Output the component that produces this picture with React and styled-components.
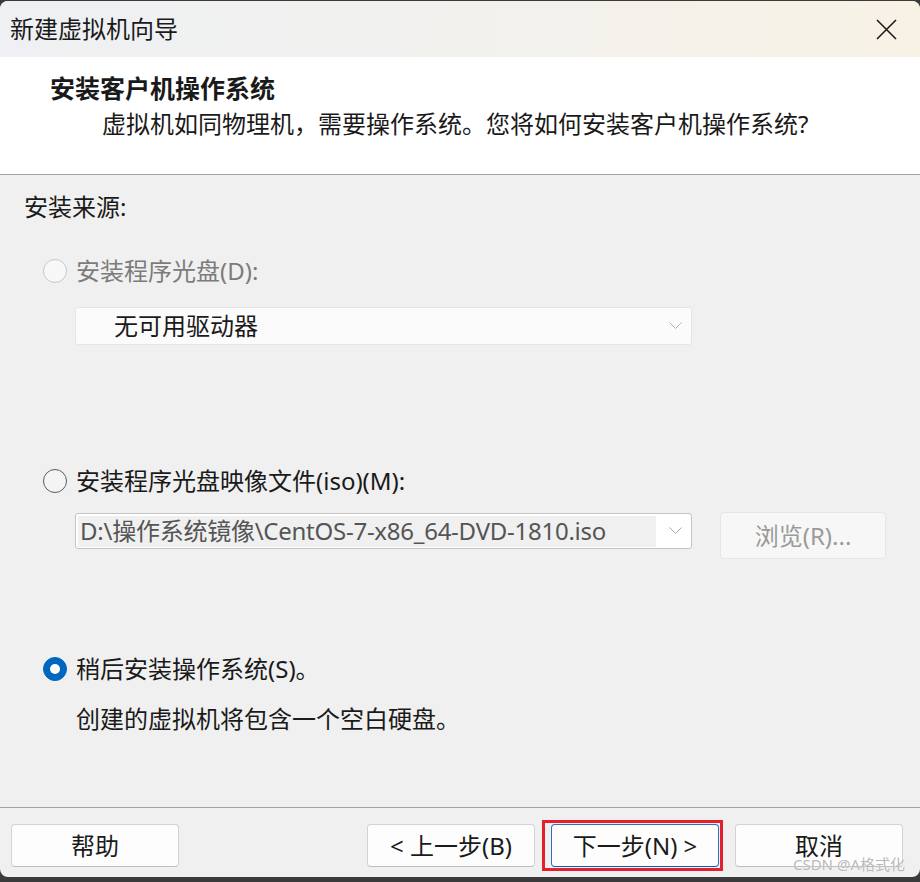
import React from 'react';
import styled, { createGlobalStyle } from 'styled-components';

const GlobalStyle = createGlobalStyle`
  html, body {
    margin: 0;
    padding: 0;
    background: #3a3a3a;
  }
  body {
    width: 920px;
    height: 882px;
    overflow: hidden;
    font-family: "Noto Sans", "Noto Sans CJK SC", sans-serif;
    color: #1a1a1a;
  }
`

const Window = styled.div`
  position: relative;
  margin-top: 1px;
  height: 876px;
  border-radius: 8px;
  overflow: hidden;
  background: #f0f0f0;
  display: flex;
  flex-direction: column;
`

const TitleBar = styled.div`
  height: 56px;
  flex-shrink: 0;
  display: flex;
  align-items: center;
  justify-content: space-between;
  padding: 0 23px 0 10px;
  background: linear-gradient(90deg, #eef0f3 0%, #f2f1ee 50%, #f8f2e5 100%);
  font-size: 24px;
  line-height: 32px;
`

const Header = styled.div`
  height: 118px;
  flex-shrink: 0;
  box-sizing: border-box;
  padding-top: 15px;
  background: #ffffff;
  border-bottom: 1px solid #a3a3a3;
`

const HeaderTitle = styled.div`
  padding-left: 50px;
  font-size: 25px;
  font-weight: 700;
  line-height: 32px;
`

const HeaderText = styled.div`
  margin-top: 4px;
  padding-left: 102px;
  font-size: 24px;
  line-height: 32px;
`

const Body = styled.div`
  flex: 1;
  padding-top: 16px;
  font-size: 24px;
  line-height: 32px;
`

const SourceLabel = styled.div`
  margin-left: 24px;
`

const OptionRow = styled.div`
  display: flex;
  align-items: center;
  gap: 9px;
  height: 32px;
  margin-top: ${p => p.$top}px;
  margin-left: 43px;
`

const Radio = styled.span`
  width: 24px;
  height: 24px;
  box-sizing: border-box;
  border-radius: 50%;
  flex-shrink: 0;
  display: flex;
  align-items: center;
  justify-content: center;
  border: 1.5px solid ${p => p.$state === 'disabled' ? '#c6c6c6' : p.$state === 'on' ? '#0067c0' : '#5c5c5c'};
  background: ${p => p.$state === 'on' ? '#0067c0' : p.$state === 'disabled' ? '#f8f8f8' : '#f4f4f4'};

  &::after {
    content: '';
    display: ${p => p.$state === 'on' ? 'block' : 'none'};
    width: 10px;
    height: 10px;
    border-radius: 50%;
    background: #ffffff;
  }
`

const OptionLabel = styled.span`
  color: ${p => p.$disabled ? '#7c7c7c' : '#1a1a1a'};
`

const Combo = styled.div`
  position: relative;
  box-sizing: border-box;
  width: 617px;
  height: ${p => p.$height}px;
  border-radius: 3px;
  display: flex;
  align-items: center;
  background: ${p => p.$disabled ? '#fbfbfb' : '#ffffff'};
  border: 1px solid ${p => p.$disabled ? '#e6e6e6' : '#c4c4c4'};
`

const DriveCombo = styled(Combo)`
  margin-top: 20px;
  margin-left: 75px;
  padding-left: 38px;
`

const ComboValue = styled.div`
  margin-left: 2px;
  width: 578px;
  height: 31px;
  display: flex;
  align-items: center;
  padding-left: 2px;
  box-sizing: border-box;
  background: #f0f0f0;
  color: #555555;
  letter-spacing: -0.25px;
  white-space: nowrap;
`

const Chevron = styled.svg`
  position: absolute;
  right: 9px;
  top: 50%;
  margin-top: -4px;
  width: 13px;
  height: 7px;
`

const IsoRow = styled.div`
  display: flex;
  align-items: flex-start;
  gap: 28px;
  margin-top: 15px;
  margin-left: 75px;
`

const IsoCombo = styled(Combo)`
  margin-top: 1px;
`

const BrowseButton = styled.div`
  width: 166px;
  height: 47px;
  box-sizing: border-box;
  border: 1px solid #e6e6e6;
  border-radius: 4px;
  background: #f7f7f7;
  color: #9a9a9a;
  display: flex;
  align-items: center;
  justify-content: center;
`

const Note = styled.div`
  margin-top: 18px;
  margin-left: 76px;
`

const Footer = styled.div`
  flex-shrink: 0;
  height: 70px;
  box-sizing: border-box;
  border-top: 1px solid #a3a3a3;
  padding: 16px 17px 0 11px;
  display: flex;
  justify-content: space-between;
  align-items: flex-start;
`

const ButtonGroup = styled.div`
  display: flex;
  gap: 16px;
`

const Button = styled.div`
  position: relative;
  width: 168px;
  height: 43px;
  box-sizing: border-box;
  border-radius: 4px;
  background: #fdfdfd;
  border: 1px solid ${p => p.$focused ? '#2f6fbf' : '#d3d3d3'};
  border-bottom-color: ${p => p.$focused ? '#0a5bb5' : '#bdbdbd'};
  font-size: 24px;
  line-height: 32px;
  display: flex;
  align-items: center;
  justify-content: center;

  &::after {
    content: '';
    display: ${p => p.$marked ? 'block' : 'none'};
    position: absolute;
    left: -10px;
    right: -5px;
    top: -5px;
    bottom: -5px;
    border: 3px solid #e3202c;
  }
`

const Watermark = styled.div`
  position: absolute;
  right: 15px;
  bottom: 4px;
  font-size: 15px;
  line-height: 17px;
  color: #b9b9b9;
  text-shadow: 0 0 1px #ffffff;
`

const ChevronIcon = ({ color }) => (
  <Chevron viewBox="0 0 13 7">
    <polyline points="0.5,0.5 6.5,6.5 12.5,0.5" fill="none" stroke={color} strokeWidth="1" />
  </Chevron>
)

const CloseIcon = () => (
  <svg width="21" height="21" viewBox="0 0 21 21">
    <path d="M1 1 L20 20 M20 1 L1 20" stroke="#1c1c1c" strokeWidth="1.6" fill="none" />
  </svg>
)

export default function App() {
  return (
    <>
      <GlobalStyle />
      <Window>
        <TitleBar>
          <span>新建虚拟机向导</span>
          <CloseIcon />
        </TitleBar>
        <Header>
          <HeaderTitle>安装客户机操作系统</HeaderTitle>
          <HeaderText>虚拟机如同物理机，需要操作系统。您将如何安装客户机操作系统?</HeaderText>
        </Header>
        <Body>
          <SourceLabel>安装来源:</SourceLabel>

          <OptionRow $top={32}>
            <Radio $state="disabled" />
            <OptionLabel $disabled>安装程序光盘(D):</OptionLabel>
          </OptionRow>
          <DriveCombo $disabled $height={38}>
            无可用驱动器
            <ChevronIcon color="#b0b0b0" />
          </DriveCombo>

          <OptionRow $top={120}>
            <Radio $state="off" />
            <OptionLabel>安装程序光盘映像文件(iso)(M):</OptionLabel>
          </OptionRow>
          <IsoRow>
            <IsoCombo $height={36}>
              <ComboValue>D:\操作系统镜像\CentOS-7-x86_64-DVD-1810.iso</ComboValue>
              <ChevronIcon color="#a8a8a8" />
            </IsoCombo>
            <BrowseButton>浏览(R)...</BrowseButton>
          </IsoRow>

          <OptionRow $top={94}>
            <Radio $state="on" />
            <OptionLabel>稍后安装操作系统(S)。</OptionLabel>
          </OptionRow>
          <Note>创建的虚拟机将包含一个空白硬盘。</Note>
        </Body>
        <Footer>
          <Button>帮助</Button>
          <ButtonGroup>
            <Button>&lt; 上一步(B)</Button>
            <Button $focused $marked>下一步(N) &gt;</Button>
            <Button>取消</Button>
          </ButtonGroup>
        </Footer>
        <Watermark>CSDN @A格式化</Watermark>
      </Window>
    </>
  )
}
